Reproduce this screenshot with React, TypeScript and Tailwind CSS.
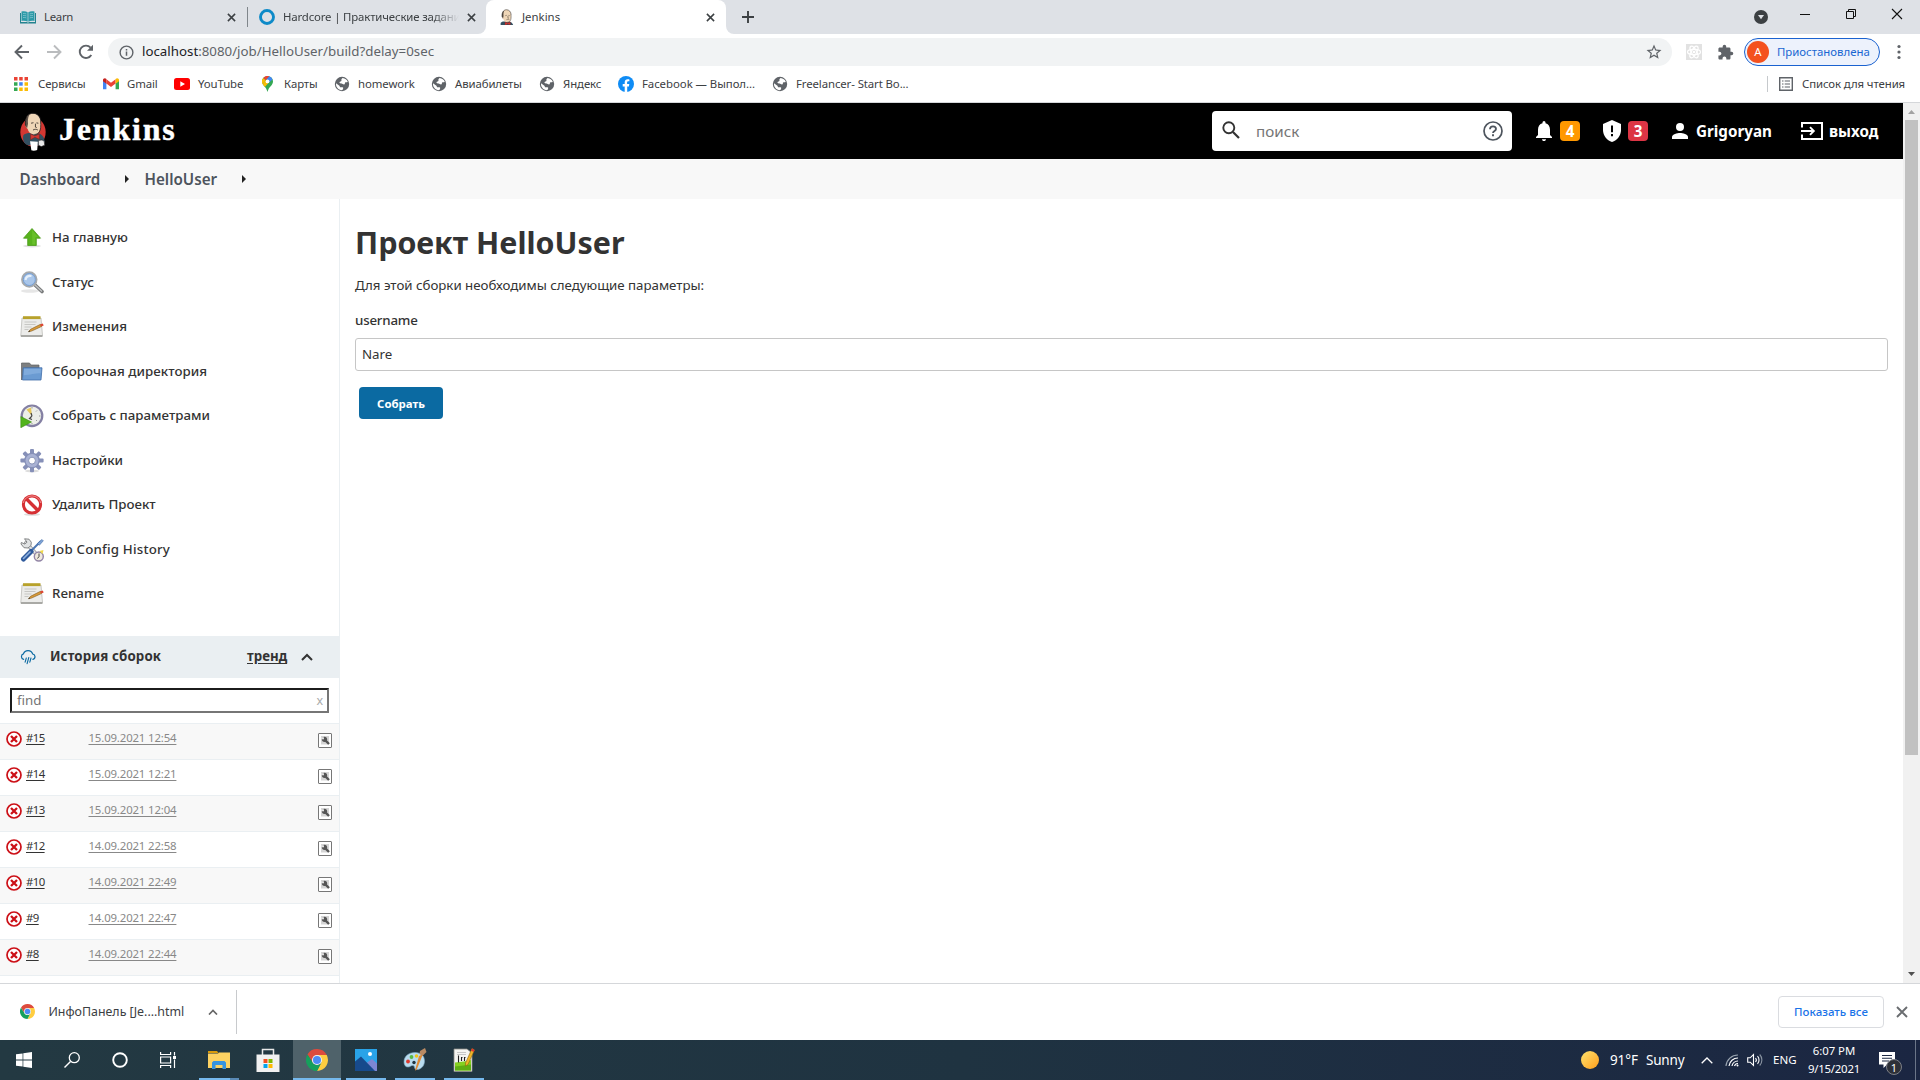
import React from "react";

type P = { className?: string };

const Globe = ({ className = "" }: P) => (
  <svg viewBox="0 0 16 16" className={"h-4 w-4 shrink-0 " + className}>
    <circle cx="8" cy="8" r="7.2" fill="#5f6368" />
    <path d="M8.6 1.9c2.4.2 4.4 1.7 5.2 3.8-1 .9-2 .2-2.7.9-.6.7.2 1.300-.5 1.700-.8.4-1.600-.4-2.400-.6-1-.2-1.700.1-2.500-.6-.6-.6.1-1.300.8-1.500.900-.2 1.100-.800.9-1.500-.1-.800.300-1.600 1.200-2.200zM2 7.300l3.400 2.400c.5.4.2 1.200.8 1.500.900.4 2-.3 2.800.3.600.5-.1 1.500-.5 2.600-3.700.500-6.900-2.800-6.500-6.800z" fill="#fff" />
  </svg>
);

const Chrome = ({ className = "" }: P) => (
  <svg viewBox="0 0 48 48" className={"shrink-0 " + className}>
    <path d="M24 13H45.300A24 24 0 0 1 24 48L33.500 29.500z" fill="#ffcd40" />
    <path d="M3.200 12 14.500 29.500 24 24V13H45.300A24 24 0 0 0 3.200 12z" fill="#dd4b3e" />
    <path d="M3.200 12 14.500 29.500A11 11 0 0 0 33.500 29.500L24 48A24 24 0 0 1 3.200 12z" fill="#169f5c" />
    <circle cx="24" cy="24" r="11" fill="#f1f1f1" />
    <circle cx="24" cy="24" r="8.800" fill="#4c8bf5" />
  </svg>
);

const Butler = ({ className = "", circle = true }: P & { circle?: boolean }) => (
  <svg viewBox="0 0 28 40" className={"shrink-0 " + className}>
    {circle && <ellipse cx="14" cy="20.500" rx="13" ry="15" fill="#d33833" />}
    <path d="M4 24c2-2 5-3 8-2l8 0c4 1 6 5 6 9l-4 3H9c-4-1-6-5-5-10z" fill="#335061" />
    <path d="M6.500 10C6.500 4 10 1.500 14 1.500s7.800 3 7.800 8.500c.3 3 .2 6-1 9-1 2.600-3 4.200-6 4-3.500-.2-5.500-2.500-6.300-5.500C6.500 16 6 13 6.500 10z" fill="#efd6b7" />
    <path d="M6.300 14c-1-5 .7-9.500 4-11.300C8.600 6 8.600 9 8.900 12l-1 5z" fill="#5c5148" />
    <path d="M6.300 14C5.300 6 9 1.300 14 1.300c4.500 0 8 3.500 8 9" fill="none" stroke="#231f20" strokeWidth=".9" />
    <path d="M21.800 10c.4 4 .2 8-1.300 10.500-1 1.800-3 2.500-5 2.500M12 11.500l2.500-.5M17.500 11.200l2 .3M16.500 12v3.500l1.300.5M14 18.500c1.600-1 3.600-1 5 0" fill="none" stroke="#3b322b" strokeWidth=".9" />
    <path d="M11.500 22.500l4.500 2 4.500-2v5.500l-4.500-2-4.500 2.500z" fill="#d33833" stroke="#81211e" strokeWidth=".6" />
    <path d="M11 30l8 .5-.7 8.500c-1.800 1-5 1-6 .3z" fill="#fff" />
    <path d="M19.500 29.500c2-1 4.500-1 6 .5l.5 4-3.500 1.500-3-1.500z" fill="#e8e8e8" stroke="#231f20" strokeWidth=".6" />
  </svg>
);

const Close = ({ className = "" }: P) => (
  <svg viewBox="0 0 10 10" className={"h-[9px] w-[9px] shrink-0 " + className}>
    <path d="M1 1l8 8M9 1L1 9" stroke="#3c4043" strokeWidth="1.700" />
  </svg>
);

function TabStrip() {
  return (
    <div className="flex h-[34px] shrink-0 bg-[#dee1e6] text-[11.4px] text-[#3c4043]">
      <div className="flex w-[247px] items-center pl-5">
        <svg viewBox="0 0 16 13" className="h-[13px] w-4 shrink-0">
          <path d="M0 2h1v9h6l1 .7 1-.7h6V2h1v10.500H0z" fill="#23838f" />
          <path d="M1.500.5C4 0 6 .2 7.700 1.200v9.500C6 9.800 4 9.600 1.500 10zM14.500.5C12 0 10 .2 8.300 1.200v9.500c1.700-.9 3.700-1.100 6.200-.7z" fill="#2c9aa8" />
          <path d="M3 2.500c1.300-.2 2.300 0 3.300.4M3 4.500c1.300-.2 2.300 0 3.300.4M3 6.500c1.300-.2 2.300 0 3.300.4M13 2.500c-1.300-.2-2.300 0-3.300.4M13 4.500c-1.300-.2-2.300 0-3.300.4M13 6.500c-1.300-.2-2.300 0-3.300.4" stroke="#8fcdd5" strokeWidth=".7" fill="none" />
        </svg>
        <span className="ml-2 w-[183px] tracking-[-0.3px]">Learn</span>
        <Close />
      </div>
      <div className="mt-[7px] h-5 w-px bg-[#80868b]" />
      <div className="flex w-[230px] items-center pl-[11px]">
        <svg viewBox="0 0 16 16" className="h-4 w-4 shrink-0">
          <circle cx="8" cy="8" r="6.500" fill="none" stroke="#0d8ac8" strokeWidth="2.900" />
        </svg>
        <span className="ml-2 w-[176px] shrink-0 tracking-[-0.15px] whitespace-nowrap [mask-image:linear-gradient(to_right,#000_85%,transparent)]">
          Hardcore | Практические задани
        </span>
        <Close className="ml-[7.500px]" />
      </div>
      <div className="h-[34px] w-2 bg-white">
        <div className="h-full w-full rounded-br-lg bg-[#dee1e6]" />
      </div>
      <div className="flex w-[240px] items-center rounded-t-lg bg-white pl-[13px]">
        <div className="flex h-4 w-[15px] items-start justify-center overflow-hidden">
          <Butler circle={false} className="h-[23px] w-[17px]" />
        </div>
        <span className="ml-2 w-[184px]">Jenkins</span>
        <Close />
      </div>
      <div className="h-[34px] w-2 bg-white">
        <div className="h-full w-full rounded-bl-lg bg-[#dee1e6]" />
      </div>
      <svg viewBox="0 0 12 12" className="mt-[11px] ml-2 h-3 w-3">
        <path d="M6 0v12M0 6h12" stroke="#3c4043" strokeWidth="1.900" />
      </svg>
      <div className="ml-auto flex w-[166px] pt-2">
        <svg viewBox="0 0 16 16" className="mt-px h-4 w-4">
          <circle cx="7" cy="8" r="7" fill="#3c4043" />
          <path d="M4 6h6L7 10.300z" fill="#dee1e6" />
        </svg>
        <svg viewBox="0 0 10 12" className="ml-[30px] h-3 w-2.5">
          <path d="M0 6.500h10" stroke="#111" />
        </svg>
        <svg viewBox="0 0 12 12" className="ml-[35px] h-3 w-3">
          <path d="M1.500 3.500h7v7h-7zM3.500 3.500v-2h7v7h-2" fill="none" stroke="#111" />
        </svg>
        <svg viewBox="0 0 12 12" className="ml-[34px] h-3 w-3">
          <path d="M1 1l10 10M11 1L1 11" stroke="#111" strokeWidth="1.100" />
        </svg>
      </div>
    </div>
  );
}

function Toolbar() {
  return (
    <div className="flex h-9 shrink-0 items-center bg-white">
      <svg viewBox="0 0 16 16" className="ml-[14px] h-4 w-4">
        <path d="M15 8H2M8 1.500L1.500 8 8 14.500" fill="none" stroke="#5f6368" strokeWidth="1.900" />
      </svg>
      <svg viewBox="0 0 16 16" className="ml-4 h-4 w-4">
        <path d="M1 8h13M8 1.500L14.500 8 8 14.500" fill="none" stroke="#babcbe" strokeWidth="1.900" />
      </svg>
      <svg viewBox="0 0 16 16" className="ml-4 h-4 w-4">
        <path d="M13.300 11A6.200 6.200 0 1 1 12.600 3.700" fill="none" stroke="#5f6368" strokeWidth="1.900" />
        <path d="M15 .8v6H9z" fill="#5f6368" />
      </svg>
      <div className="ml-[14px] flex h-7 w-[1564px] items-center rounded-full bg-[#f1f3f4] pl-[11px]">
        <svg viewBox="0 0 16 16" className="h-[15px] w-[15px]">
          <circle cx="8" cy="8" r="6.800" fill="none" stroke="#5f6368" strokeWidth="1.500" />
          <path d="M8 7v4.500M8 4.300v1.600" stroke="#5f6368" strokeWidth="1.600" />
        </svg>
        <span className="ml-2 text-[13.3px] text-[#5f6368]">
          <span className="text-[#202124]">localhost</span>:8080/job/HelloUser/build?delay=0sec
        </span>
        <svg viewBox="0 0 24 24" className="mr-[9px] ml-auto h-[18px] w-[18px]">
          <path d="M22 9.240l-7.190-.620L12 2 9.190 8.630 2 9.240l5.460 4.730L5.820 21 12 17.270 18.180 21l-1.630-7.030L22 9.240zM12 15.400l-3.760 2.270 1-4.280-3.320-2.880 4.380-.380L12 6.100l1.710 4.040 4.380.380-3.320 2.880 1 4.280L12 15.400z" fill="#5f6368" />
        </svg>
      </div>
      <div className="ml-[14px] flex h-4 w-4 items-center justify-center bg-[#e2e2e2]">
        <svg viewBox="0 0 16 16" className="h-4 w-4">
          <g fill="none" stroke="#fff" strokeWidth="1.200">
            <ellipse cx="8" cy="8" rx="6.500" ry="2.600" />
            <ellipse cx="8" cy="8" rx="6.500" ry="2.600" transform="rotate(60 8 8)" />
            <ellipse cx="8" cy="8" rx="6.500" ry="2.600" transform="rotate(120 8 8)" />
          </g>
          <circle cx="8" cy="8" r="1.300" fill="#fff" />
        </svg>
      </div>
      <svg viewBox="0 0 24 24" className="ml-[15px] h-[17px] w-[17px]">
        <path d="M20.500 11H19V7c0-1.100-.9-2-2-2h-4V3.500a2.500 2.500 0 0 0-5 0V5H4c-1.100 0-2 .9-2 2v3.800h1.500c1.500 0 2.700 1.200 2.700 2.700S5 16.200 3.500 16.200H2V20c0 1.100.9 2 2 2h3.800v-1.500c0-1.500 1.200-2.700 2.700-2.700s2.700 1.200 2.700 2.700V22H17c1.100 0 2-.9 2-2v-4h1.500a2.500 2.500 0 0 0 0-5z" fill="#5f6368" />
      </svg>
      <div className="ml-2.5 flex h-7 w-[136px] items-center rounded-full border border-[#1a62d0] bg-[#edf2fc] pl-0.5 text-[11.4px] text-[#1967d2]">
        <div className="flex h-[22px] w-[22px] items-center justify-center rounded-full bg-[#f4511e] text-white">A</div>
        <span className="ml-2">Приостановлена</span>
      </div>
      <svg viewBox="0 0 4 16" className="ml-[17px] h-4 w-1">
        <circle cx="2" cy="2.500" r="1.600" fill="#5f6368" />
        <circle cx="2" cy="8" r="1.600" fill="#5f6368" />
        <circle cx="2" cy="13.500" r="1.600" fill="#5f6368" />
      </svg>
    </div>
  );
}

function Bookmarks() {
  return (
    <div className="flex h-[33px] shrink-0 items-center border-b border-[#d5d7da] bg-white pb-[5px] pl-[14px] text-[11.4px] tracking-[-0.1px] whitespace-nowrap text-[#3c4043]">
      <svg viewBox="0 0 14 14" className="h-[14px] w-[14px]">
        <path d="M0 0h3.500v3.500H0zM5.200 0h3.500v3.500H5.200zM10.500 0H14v3.500h-3.500z" fill="#ea4335" />
        <path d="M0 5.200h3.500v3.500H0zM0 10.500h3.500V14H0z" fill="#34a853" />
        <path d="M5.200 5.200h3.500v3.500H5.200z" fill="#4285f4" />
        <path d="M10.500 5.200H14v3.500h-3.500zM5.200 10.500h3.500V14H5.200zM10.500 10.500H14V14h-3.500z" fill="#fbbc04" />
      </svg>
      <span className="ml-2.5 w-[65px]">Сервисы</span>
      <svg viewBox="0 0 16 12" className="h-3 w-4">
        <path d="M0 1.800V11.200h3.400V5z" fill="#4285f4" />
        <path d="M16 1.800V11.200h-3.400V5z" fill="#34a853" />
        <path d="M3.400 1.300v4.300L8 9l4.600-3.400V1.300L8 4.700z" fill="#ea4335" />
        <path d="M0 2.200C0 .3 2 -.3 3.400.9v4.800L0 3.200z" fill="#c5221f" />
        <path d="M16 2.200C16 .3 14 -.3 12.600.9v4.800L16 3.200z" fill="#fbbc04" />
      </svg>
      <span className="ml-2 w-[47px]">Gmail</span>
      <svg viewBox="0 0 16 12" className="h-3 w-4">
        <rect width="16" height="12" rx="2.500" fill="#f00" />
        <path d="M6.300 3.300v5.400L11 6z" fill="#fff" />
      </svg>
      <span className="ml-2 w-[63px]">YouTube</span>
      <svg viewBox="0 0 11 16" className="mr-0.5 ml-px h-4 w-[11px]">
        <path d="M5.500 0A5.500 5.500 0 0 0 0 5.500C0 9.500 4.300 10.500 5.500 16 6.700 10.500 11 9.500 11 5.500A5.500 5.500 0 0 0 5.500 0z" fill="#34a853" />
        <path d="M.6 8C-.7 5.500.1 3 1.300 1.900L4 4.200z" fill="#fbbc04" />
        <path d="M1.300 1.900A5.500 5.500 0 0 1 7.300.3L4 4.200z" fill="#ea4335" />
        <path d="M7.300.3a5.500 5.500 0 0 1 3.200 3.100L7.300 6.300 4.500 3.600z" fill="#4285f4" />
        <path d="M.6 8l3-3.200 3.200 1.800L2.900 11z" fill="#fbbc04" />
        <circle cx="5.500" cy="5.400" r="1.900" fill="#fff" />
      </svg>
      <span className="ml-[9px] w-[50px]">Карты</span>
      <Globe />
      <span className="ml-2 w-[73px]">homework</span>
      <Globe />
      <span className="ml-2 w-[84px]">Авиабилеты</span>
      <Globe />
      <span className="ml-2 w-[55px]">Яндекс</span>
      <svg viewBox="0 0 16 16" className="h-4 w-4">
        <circle cx="8" cy="8" r="8" fill="#0f8cf5" />
        <path d="M6.700 16v-5.600H4.700V8.100h2V6.300c0-2 1.200-3.100 3-3.100.9 0 1.700.2 1.700.2v1.900h-1c-1 0-1.300.6-1.300 1.200v1.600h2.200l-.4 2.300H9.200V16z" fill="#fff" />
      </svg>
      <span className="ml-2 w-[130px] tracking-[-0.05px]">Facebook — Выпол...</span>
      <Globe />
      <span className="ml-2">Freelancer- Start Bo...</span>
      <div className="ml-auto h-4 w-px bg-[#c6c9cc]" />
      <svg viewBox="0 0 14 14" className="ml-[11px] h-[14px] w-[14px]">
        <path d="M.7.7h12.600v12.600H.7z" fill="none" stroke="#5f6368" strokeWidth="1.400" />
        <path d="M3 4h1.500M3 7h1.500M3 10h1.500M5.700 4H11M5.700 7H11M5.700 10H11" stroke="#5f6368" strokeWidth="1.200" />
      </svg>
      <span className="ml-[9px] w-[118px]">Список для чтения</span>
    </div>
  );
}

function Header() {
  return (
    <div className="flex h-14 shrink-0 items-center bg-black text-[15.2px] font-bold text-white">
      <Butler className="ml-[19px] h-[39px] w-[28px]" />
      <span className="ml-3 -translate-y-[2.500px] font-['Liberation_Serif',serif] text-[32px] leading-none tracking-[1.8px] [-webkit-text-stroke:0.4px_#fff]">Jenkins</span>
      <div className="ml-auto flex h-10 w-[300px] items-center rounded bg-white pl-2.5">
        <svg viewBox="0 0 18 18" className="h-[18px] w-[18px] -translate-y-px">
          <circle cx="6.800" cy="6.800" r="5.500" fill="none" stroke="#333" strokeWidth="1.900" />
          <path d="M11 11l6 6" stroke="#333" strokeWidth="2.200" />
        </svg>
        <span className="ml-4 font-normal text-[#757575]">поиск</span>
        <svg viewBox="0 0 20 20" className="mr-[9.500px] ml-auto h-5 w-5">
          <circle cx="10" cy="10" r="9" fill="none" stroke="#4d545d" strokeWidth="1.700" />
          <path d="M7 8.200c0-1.800 1.200-2.900 3-2.900s3 1.100 3 2.600c0 2-3 2-3 4.100" fill="none" stroke="#4d545d" strokeWidth="1.800" />
          <path d="M10 13.300v2" stroke="#4d545d" strokeWidth="1.900" />
        </svg>
      </div>
      <svg viewBox="0 0 16 20" className="ml-6 h-5 w-4">
        <path d="M8 20c1.200 0 2-.8 2-1.800H6C6 19.200 6.800 20 8 20zM14 14V8.700c0-3.200-1.600-5.800-4.500-6.500V1.600a1.500 1.500 0 0 0-3 0v.6C3.600 2.900 2 5.500 2 8.700V14l-2 2v1h16v-1z" fill="#fff" />
      </svg>
      <span className="ml-2 flex h-5 w-5 items-center justify-center rounded bg-[#ff9800]">4</span>
      <svg viewBox="0 0 18 22" className="ml-[23px] h-[22px] w-[18px]">
        <path d="M9 0L0 4v6c0 5.500 3.800 10.700 9 12 5.200-1.300 9-6.500 9-12V4z" fill="#fff" />
        <path d="M9 5.500v6.800M9 14v2.200" stroke="#000" strokeWidth="2" />
      </svg>
      <span className="ml-[7px] flex h-5 w-5 items-center justify-center rounded bg-[#dc3545]">3</span>
      <svg viewBox="0 0 16 16" className="ml-6 h-4 w-4">
        <circle cx="8" cy="4" r="4" fill="#fff" />
        <path d="M0 16v-2c0-2.700 5.300-4 8-4s8 1.300 8 4v2z" fill="#fff" />
      </svg>
      <span className="ml-2 w-[105px]">Grigoryan</span>
      <svg viewBox="0 0 22 18" className="h-[18px] w-[22px]">
        <path d="M1 5.500V1h20v16H1v-4.500" fill="none" stroke="#fff" strokeWidth="2" />
        <path d="M0 9h12M9 5.200L12.800 9 9 12.800" fill="none" stroke="#fff" strokeWidth="1.900" />
      </svg>
      <span className="ml-1.5 w-[74px]">выход</span>
    </div>
  );
}

const Notepad = () => (
  <svg viewBox="0 0 24 24" className="h-6 w-6">
    <path d="M2 3h19l1.500 17.500H.8z" fill="#ececea" stroke="#b5b5b0" strokeWidth=".7" />
    <path d="M.8 20h21.700v2H.8z" fill="#a9a9a5" />
    <path d="M3 1.200h17.500v2.900H3z" fill="#b8a22c" />
    <path d="M4.500 7h12M4.500 9.500h11M4.500 12h7M4.500 14.500h4" stroke="#c3c3c0" strokeWidth=".9" />
    <path d="M8.500 16.800l2-2.500 10-5 1 2.200-10 4.600z" fill="#d99b3a" stroke="#7d5518" strokeWidth=".6" />
    <path d="M20 9.500l2.800-1.100.9 2-2.500 1.200z" fill="#dd4633" />
    <path d="M8.300 16.900l1-1.500.8 1.100z" fill="#333" />
  </svg>
);

const sideItems: { label: string; cls: string; icon: React.ReactNode }[] = [
  {
    label: "На главную", cls: "",
    icon: (
      <svg viewBox="0 0 24 24" className="h-6 w-6">
        <ellipse cx="12" cy="20" rx="9" ry="1.500" fill="#e2e2e2" />
        <path d="M12 2.500l8.500 9.700h-4.200v7.300H7.700v-7.300H3.500z" fill="#58b31d" stroke="#4b9a1a" strokeWidth=".8" />
        <path d="M12 4l6.300 7.300h-3v7.300h-3z" fill="#77cc38" opacity=".5" />
      </svg>
    ),
  },
  {
    label: "Статус", cls: "",
    icon: (
      <svg viewBox="0 0 24 24" className="h-6 w-6">
        <ellipse cx="10" cy="20" rx="9" ry="1.800" fill="#e6e6e6" />
        <path d="M14.500 13.500l7.500 7" stroke="#77797a" strokeWidth="3.600" strokeLinecap="round" />
        <path d="M15 14l6.500 6" stroke="#c0c2c3" strokeWidth="1.500" strokeLinecap="round" />
        <circle cx="9.300" cy="8.500" r="7.200" fill="#a9c6ea" stroke="#a6a9ac" strokeWidth="2" />
        <circle cx="9.300" cy="8.500" r="6" fill="none" stroke="#6f9bd2" strokeWidth=".9" />
        <path d="M5.500 9c.5-3 2.500-4.500 6-4" stroke="#e6f0fb" strokeWidth="2.200" fill="none" />
      </svg>
    ),
  },
  { label: "Изменения", cls: "", icon: <Notepad /> },
  {
    label: "Сборочная директория", cls: "tracking-[0.05px]",
    icon: (
      <svg viewBox="0 0 24 24" className="h-6 w-6">
        <path d="M1.500 20V3h8l1.500 2h8v3H5z" fill="#7d7f80" stroke="#606263" strokeWidth=".7" />
        <path d="M3.200 7.800H22L21 20H2.500z" fill="#6b9bd2" stroke="#3f6ca8" strokeWidth=".8" />
        <path d="M4 8.700h17l-.4 4.500c-6 0-10 1.500-16.900 2z" fill="#8db5e2" opacity=".6" />
      </svg>
    ),
  },
  {
    label: "Собрать с параметрами", cls: "tracking-[0px]",
    icon: (
      <svg viewBox="0 0 24 24" className="h-6 w-6">
        <circle cx="12" cy="11.800" r="10.300" fill="#eceee8" stroke="#8480a3" strokeWidth="2.200" />
        <path d="M12 12L6.500 5.500 11 3.500z" fill="#e5c65a" />
        <path d="M12 12l-1-3M12 12l-2.500 2.500 2.500 1" stroke="#444" strokeWidth="1.200" fill="none" />
        <path d="M12 3v1.500M12 19v1.500M19 12h1.500M17 6.500l-1 1M17 17l-1-1" stroke="#999" strokeWidth="1" />
        <path d="M.8 12.500L11.500 18 .8 23.700z" fill="#52b31c" stroke="#3c8c12" strokeWidth=".6" />
      </svg>
    ),
  },
  {
    label: "Настройки", cls: "",
    icon: (
      <svg viewBox="0 0 24 24" className="h-6 w-6">
        <ellipse cx="12" cy="22" rx="7" ry="1.300" fill="#ddd" />
        <g fill="#8690b8">
          <rect x="10" y="0" width="4" height="23.200" rx="1" />
          <rect x="10" y="0" width="4" height="23.200" rx="1" transform="rotate(45 12 11.600)" />
          <rect x="10" y="0" width="4" height="23.200" rx="1" transform="rotate(90 12 11.600)" />
          <rect x="10" y="0" width="4" height="23.200" rx="1" transform="rotate(135 12 11.600)" />
          <circle cx="12" cy="11.600" r="7.800" />
        </g>
        <circle cx="12" cy="11.600" r="6.500" fill="#a9b2d4" />
        <circle cx="12" cy="11.600" r="3.400" fill="#fff" stroke="#7a86ad" strokeWidth=".8" />
      </svg>
    ),
  },
  {
    label: "Удалить Проект", cls: "",
    icon: (
      <svg viewBox="0 0 24 24" className="h-6 w-6">
        <ellipse cx="12" cy="21.500" rx="8" ry="1.300" fill="#ddd" />
        <circle cx="12" cy="11.500" r="8.600" fill="#fff" stroke="#d63034" strokeWidth="3" />
        <path d="M6.300 5.800l11.400 11.400" stroke="#d63034" strokeWidth="3.400" />
        <path d="M3.200 10a9 9 0 0 1 17.600 0" stroke="#f08a8a" strokeWidth="1" fill="none" />
      </svg>
    ),
  },
  {
    label: "Job Config History", cls: "tracking-[0.2px]",
    icon: (
      <svg viewBox="0 0 24 24" className="h-6 w-6">
        <path d="M6 5l13 14" stroke="#8e9092" strokeWidth="3.800" strokeLinecap="round" />
        <path d="M6 5l13 14" stroke="#e4e5e6" strokeWidth="2.300" strokeLinecap="round" />
        <path d="M4.500.8l4.500.4 2.300 3-.3 3.300-3 2.500-4-.3L1 6l.3-1.500 3.700 1.600 2-2z" fill="#e1e3e4" stroke="#77797b" strokeWidth=".9" />
        <path d="M21 3l-9 9" stroke="#4c77b3" strokeWidth="2" />
        <path d="M17.500 5.500l4.500-4 1.300 1.300-4 4.500z" fill="#7fa6d9" stroke="#3e66a3" strokeWidth=".6" />
        <path d="M3.500 21L11 13.500" stroke="#2f5a9c" strokeWidth="5" strokeLinecap="round" />
        <path d="M3.500 20.500L10 14" stroke="#8fb2e0" strokeWidth="1.600" strokeLinecap="round" />
        <circle cx="18.800" cy="18.500" r="4.500" fill="#efe9dd" stroke="#9285a6" strokeWidth="1.400" />
        <path d="M19 15.500v3l-1.500 2" stroke="#333" strokeWidth=".9" fill="none" />
        <path d="M19.500 13l4-1-1 4z" fill="#f0d949" />
      </svg>
    ),
  },
  { label: "Rename", cls: "", icon: <Notepad /> },
];

const builds: [string, string][] = [
  ["#15", "15.09.2021 12:54"],
  ["#14", "15.09.2021 12:21"],
  ["#13", "15.09.2021 12:04"],
  ["#12", "14.09.2021 22:58"],
  ["#10", "14.09.2021 22:49"],
  ["#9", "14.09.2021 22:47"],
  ["#8", "14.09.2021 22:44"],
];

function Sidebar() {
  return (
    <div className="flex w-[340px] shrink-0 flex-col border-r border-[#eaeff2]">
      <div className="h-[437px] shrink-0 pt-[17px]">
        {sideItems.map((s, i) => (
          <div key={i} className="flex h-[44.5px] items-center pl-5">
            {s.icon}
            <span className={"ml-2 text-[13.3px] font-medium whitespace-nowrap " + s.cls}>{s.label}</span>
          </div>
        ))}
      </div>
      <div className="flex h-[42px] shrink-0 items-center bg-[#eaeff2] pl-5 text-[13.3px] font-bold">
        <svg viewBox="0 0 16 16" className="h-4 w-4">
          <path d="M3.600 10.300A2.800 2.800 0 0 1 3.400 4.900 4.900 4.900 0 0 1 12.700 5a2.700 2.700 0 0 1 .2 5.300" fill="none" stroke="#0b6aa2" strokeWidth="1.200" strokeLinecap="round" />
          <path d="M6.300 9l-1.200 4.200M8.800 8.500l-1.700 6.200M11 9l-1.200 4.200" stroke="#0b6aa2" strokeWidth="1.100" strokeLinecap="round" />
        </svg>
        <span className="ml-3.5 w-[197px] tracking-[0.1px]">История сборок</span>
        <span className="w-[54px] underline underline-offset-2">тренд</span>
        <svg viewBox="0 0 12 8" className="h-2 w-3">
          <path d="M1 7l5-5 5 5" fill="none" stroke="#333" strokeWidth="2" />
        </svg>
      </div>
      <div className="mt-2.5 ml-2.5 flex h-[25px] w-[319px] shrink-0 items-center justify-between border-2 border-t-[#1c1c1c] border-r-[#767676] border-b-[#767676] border-l-[#1c1c1c] px-[5px] pt-px pr-1 text-[13.3px] text-[#757575]">
        <span>find</span>
        <span className="text-[12.500px] leading-none text-[#aaa]">x</span>
      </div>
      <div className="mt-2.5">
        {builds.map(([n, d], i) => (
          <div key={n} className={"flex h-9 border-t border-[#eaeff2] pt-1.5 text-[11.4px] " + (i % 2 ? "bg-white" : "bg-[#f8f8f8]")}>
            <svg viewBox="0 0 16 16" className="mt-px ml-1.5 h-4 w-4">
              <circle cx="8" cy="8" r="7" fill="#fff" stroke="#cc1017" strokeWidth="1.700" />
              <path d="M5 5l6 6M11 5l-6 6" stroke="#cc1017" strokeWidth="2.300" />
            </svg>
            <span className="ml-1 w-[62.500px] leading-4 tracking-[-0.6px] underline underline-offset-2">{n}</span>
            <span className="leading-4 tracking-[-0.15px] text-[#888] underline underline-offset-2">{d}</span>
            <svg viewBox="0 0 14 15" className="mt-[3px] mr-[7px] ml-auto h-[15px] w-[14px]">
              <rect x=".5" y=".5" width="13" height="14" rx=".5" fill="#fff" stroke="#777" />
              <path d="M3 3h8v8.500H3z" fill="#d4d4d4" />
              <circle cx="6.500" cy="6.300" r="2.600" fill="#555" />
              <path d="M3 4.300h3v2H3z" fill="#e0e0e0" />
              <path d="M7.500 7.500l3.500 3.500" stroke="#555" strokeWidth="2.400" />
            </svg>
          </div>
        ))}
        <div className="h-2 border-t border-[#eaeff2]" />
      </div>
    </div>
  );
}

function Page() {
  return (
    <div className="flex h-[880px] shrink-0 overflow-hidden">
      <div className="flex w-[1903px] flex-col bg-white text-[#333]">
        <Header />
        <div className="flex h-10 shrink-0 items-center bg-[#f8f8f8] pl-[19.5px] text-[15.2px] font-semibold text-[#4d545d]">
          <span className="w-[105px]">Dashboard</span>
          <svg viewBox="0 0 4 8" className="h-2 w-1"><path d="M0 0l4 4-4 4z" fill="#222" /></svg>
          <span className="ml-4 w-[97px]">HelloUser</span>
          <svg viewBox="0 0 4 8" className="h-2 w-1"><path d="M0 0l4 4-4 4z" fill="#222" /></svg>
        </div>
        <div className="flex flex-1">
          <Sidebar />
          <div className="flex-1 pl-[15px] text-[13.3px]">
            <h1 className="mt-6 text-[30.400px] leading-10 font-bold">Проект HelloUser</h1>
            <p className="mt-3 leading-5 tracking-[-0.02px]">Для этой сборки необходимы следующие параметры:</p>
            <div className="mt-[15px] leading-5 font-medium tracking-[-0.2px]">username</div>
            <div className="mt-2 flex h-[33px] w-[1533px] items-center rounded-[3px] border border-[#c6c6c6] pt-px pl-1.5">Nare</div>
            <button className="mt-4 ml-1 flex h-8 w-[84px] items-center justify-center rounded bg-[#0b6aa2] pt-px text-[11.4px] font-bold text-white">Собрать</button>
          </div>
        </div>
      </div>
      <div className="flex w-[17px] flex-col items-center bg-[#f1f1f1]">
        <svg viewBox="0 0 7 4" className="mt-[7px] h-1 w-[7px]"><path d="M3.500 0L7 4H0z" fill="#a3a3a3" /></svg>
        <div className="mt-[6px] h-[635px] w-[13px] bg-[#c1c1c1]" />
        <svg viewBox="0 0 7 4" className="mt-auto mb-[7px] h-1 w-[7px]"><path d="M0 0h7L3.500 4z" fill="#505050" /></svg>
      </div>
    </div>
  );
}

function DownloadBar() {
  return (
    <div className="flex h-[57px] shrink-0 items-center border-t border-[#d5d7da] bg-white pl-5 text-[#3c4043]">
      <Chrome className="h-[15px] w-[15px] -translate-y-px" />
      <span className="ml-[13.500px] w-[159px] text-[12.400px]">ИнфоПанель [Je....html</span>
      <svg viewBox="0 0 10 6" className="h-1.5 w-2.5"><path d="M1 5.500l4-4 4 4" fill="none" stroke="#666" strokeWidth="1.700" /></svg>
      <div className="ml-[18px] h-11 w-px bg-[#c8cacd]" />
      <div className="ml-auto flex h-8 w-[106px] items-center justify-center rounded border border-[#dadce0] text-[11.500px] font-medium text-[#1a73e8]">Показать все</div>
      <svg viewBox="0 0 12 12" className="mr-3 ml-3 h-3 w-3"><path d="M1 1l10 10M11 1L1 11" stroke="#6a6d70" strokeWidth="1.900" /></svg>
    </div>
  );
}

function Taskbar() {
  return (
    <div className="flex h-10 shrink-0 items-center bg-linear-to-r from-[#233942] via-[#1f3341] to-[#1b2642] text-white">
      <div className="flex w-12 justify-center">
        <svg viewBox="0 0 16 16" className="h-4 w-4"><path d="M0 2.300L6.600 1.400v6.200H0zM7.300 1.300L16 0v7.600H7.300zM0 8.400h6.600v6.200L0 13.700zM7.300 8.400H16V16l-8.700-1.300z" fill="#fff" /></svg>
      </div>
      <div className="flex w-12 justify-center">
        <svg viewBox="0 0 16 16" className="h-4 w-4"><circle cx="10.300" cy="5.700" r="5" fill="none" stroke="#fff" strokeWidth="1.300" /><path d="M6.500 9.500L.5 15.500" stroke="#fff" strokeWidth="1.400" /></svg>
      </div>
      <div className="flex w-12 justify-center">
        <svg viewBox="0 0 16 16" className="h-4 w-4"><circle cx="8" cy="8" r="6.800" fill="none" stroke="#fff" strokeWidth="1.900" /></svg>
      </div>
      <div className="flex w-[55px] pl-4">
        <svg viewBox="0 0 16 16" className="h-4 w-4"><path d="M.6 0v2.500h10V0M.6 16v-2.500h10V16M.6 5h10v6H.6zM14.500 0v3.500M14.500 7.500V16" fill="none" stroke="#fff" strokeWidth="1.200" /><path d="M13 4h3v3h-3z" fill="#fff" /></svg>
      </div>
      <div className="flex h-full w-10 flex-col items-center">
        <svg viewBox="0 0 22 18" className="mt-[11px] h-[18px] w-[22px]">
          <path d="M0 0h9l1.500 2H0z" fill="#d99b0b" />
          <path d="M0 2.500h10l1-1H22V17H0z" fill="#fdd262" />
          <path d="M4 18v-6.500L5.500 10h11l1.500 1.500V18h-3.500v-4h-7v4z" fill="#3794e0" />
        </svg>
        <div className="mt-auto flex h-0.5 w-full"><div className="w-[31px] bg-[#76b9ed]" /><div className="w-[9px] bg-[#5a8ab5]" /></div>
      </div>
      <div className="flex w-[54px] justify-center pl-1">
        <svg viewBox="0 0 24 24" className="h-6 w-6">
          <path d="M6.500 7V1.500h11V7" fill="none" stroke="#e8e8e8" strokeWidth="1.500" />
          <path d="M.5 6.500h23V24H.5z" fill="#f1f1f1" />
          <path d="M7.500 11h4v4h-4z" fill="#f25022" /><path d="M12.500 11h4v4h-4z" fill="#7fba00" />
          <path d="M7.500 16h4v4h-4z" fill="#00a4ef" /><path d="M12.500 16h4v4h-4z" fill="#ffb900" />
        </svg>
      </div>
      <div className="flex h-full w-12 flex-col items-center bg-[#4f626a]">
        <Chrome className="mt-[9px] h-[22px] w-[22px]" />
        <div className="mt-auto h-0.5 w-full bg-[#76b9ed]" />
      </div>
      <div className="ml-[5px] flex h-full w-10 flex-col items-center">
        <svg viewBox="0 0 22 22" className="mt-[9px] h-[22px] w-[22px]">
          <path d="M0 0h22v22H0z" fill="#29a3e8" />
          <path d="M10 15l7-5 5 4.500V22H10z" fill="#7d86d2" />
          <path d="M0 12.500L6 7.500 20 22H0z" fill="#174a8c" />
          <circle cx="15" cy="5" r="2" fill="#fff" />
        </svg>
        <div className="mt-auto h-0.5 w-full bg-[#76b9ed]" />
      </div>
      <div className="ml-[9px] flex h-full w-10 flex-col items-center">
        <svg viewBox="0 0 24 24" className="mt-2 h-6 w-6">
          <path d="M1 14C1 8 6 4.500 12 4.500c6 0 9.500 3.500 9.500 8.500 0 6-5 9-8 8.500-3-.5-1-3.500-3.500-4-2-.3-2.500 1.500-5 1.500S1 17 1 14z" fill="#b9dcef" stroke="#7faac4" strokeWidth=".6" />
          <circle cx="5" cy="13.500" r="1.900" fill="#dc3b30" /><circle cx="8.500" cy="9" r="1.900" fill="#58b947" /><circle cx="13.500" cy="8" r="1.800" fill="#f0c419" />
          <circle cx="11" cy="14.500" r="1.700" fill="#20343f" />
          <path d="M20 6l-6.500 16-1.500.5L16 8z" fill="#e08a34" />
          <path d="M17 3l5-3 1.500 4-4 4-3-2z" fill="#b98a63" />
        </svg>
        <div className="mt-auto h-0.5 w-full bg-[#76b9ed]" />
      </div>
      <div className="ml-[9px] flex h-full w-10 flex-col items-center">
        <svg viewBox="0 0 22 24" className="mt-2 h-6 w-[22px]">
          <path d="M1 1h13l5 4v18.500H1z" fill="#f5f5f2" stroke="#8a8a85" strokeWidth=".8" />
          <path d="M2 14.500c6-1 11-1 16-2.500v10.500H2z" fill="#86d021" />
          <path d="M2 18.500c6-1 11-1 16-2v6H2z" fill="#5fae12" />
          <path d="M4 4.500h9M4 6.500h9" stroke="#bbb" strokeWidth=".8" />
          <path d="M5.500 7.500v7M8.500 9.500v3.500M11.500 9.500v3.500M8 9.500h1.500M11 9.500h1.500" stroke="#222" strokeWidth="1.100" />
          <path d="M19 .5l2.500 1.500-6.500 14.500-2.500 1.500V15z" fill="#f0b428" stroke="#8d6410" strokeWidth=".6" />
          <path d="M19 .5l2.500 1.500-1 2-2.500-1.500z" fill="#d33" />
        </svg>
        <div className="mt-auto h-0.5 w-full bg-[#76b9ed]" />
      </div>
      <div className="ml-auto h-[18px] w-[18px] rounded-full bg-linear-to-br from-[#ffe36b] to-[#ff9d0a]" />
      <span className="ml-[11px] w-9 text-[13.500px] tracking-[-0.1px]">91°F</span>
      <span className="w-[55px] text-[13.500px] tracking-[-0.2px]">Sunny</span>
      <svg viewBox="0 0 12 7" className="h-[7px] w-3"><path d="M.7 6.300L6 1l5.300 5.300" fill="none" stroke="#fff" strokeWidth="1.300" /></svg>
      <svg viewBox="0 0 14 14" className="ml-3 h-[14px] w-[14px]">
        <path d="M1 13A12 12 0 0 1 13 2" fill="none" stroke="#9aa5b1" strokeWidth="1.200" />
        <path d="M4 13a9 9 0 0 1 9-8M7 13a6 6 0 0 1 6-5M9.500 13A3.500 3.500 0 0 1 13 10.500" fill="none" stroke="#fff" strokeWidth="1.200" />
        <circle cx="12.500" cy="12.500" r="1" fill="#fff" />
      </svg>
      <svg viewBox="0 0 16 14" className="ml-2 h-[14px] w-4">
        <path d="M.7 4.800h2.500L6.500 1.500v11L3.200 9.200H.7z" fill="none" stroke="#fff" strokeWidth="1.100" />
        <path d="M8.500 5a3 3 0 0 1 0 4M10.500 3.200a5.500 5.500 0 0 1 0 7.600" fill="none" stroke="#fff" strokeWidth="1.100" />
        <path d="M12.700 1.500a8 8 0 0 1 0 11" fill="none" stroke="#8893a0" strokeWidth="1.100" />
      </svg>
      <span className="ml-2.5 w-[29px] text-[11.500px]">ENG</span>
      <div className="flex w-[64px] flex-col items-center text-[11.400px] leading-[18px]">
        <span className="tracking-[-0.05px]">6:07 PM</span>
        <span className="tracking-[-0.25px]">9/15/2021</span>
      </div>
      <div className="relative ml-[13px] h-6 w-9">
        <svg viewBox="0 0 16 16" className="mt-1 h-4 w-4">
          <path d="M0 0h16v12.500h-8L4.500 16v-3.500H0z" fill="#fff" />
          <path d="M3 3.500h10M3 6.300h10M3 9h7" stroke="#1c2843" strokeWidth="1.100" />
        </svg>
        <span className="absolute top-[11px] left-[7px] flex h-4 w-4 items-center justify-center rounded-full border border-[#7d8087] bg-[#2d3038] text-[11px] leading-none">1</span>
      </div>
      <div className="mr-1 h-full w-px bg-[#6b7588]" />
    </div>
  );
}

export default function App() {
  return (
    <div className="flex h-[1080px] w-[1920px] flex-col overflow-hidden bg-white font-['Noto_Sans','Open_Sans',sans-serif]">
      <TabStrip />
      <Toolbar />
      <Bookmarks />
      <Page />
      <DownloadBar />
      <Taskbar />
    </div>
  );
}
